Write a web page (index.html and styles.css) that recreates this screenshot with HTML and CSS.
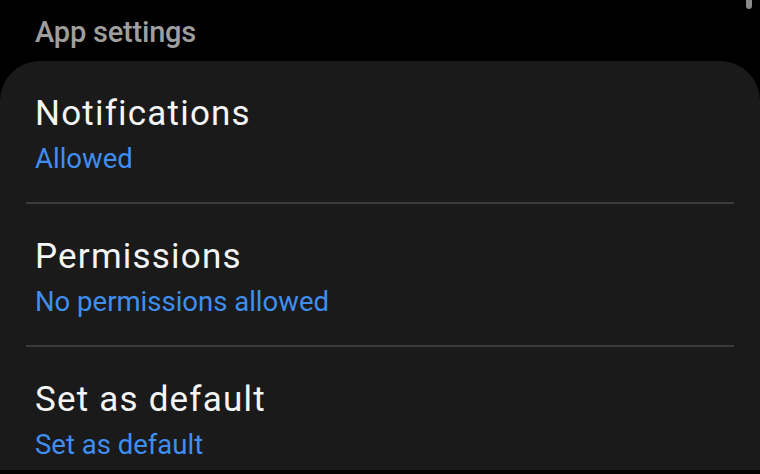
FILE: index.html
```html
<!DOCTYPE html>
<html>
<head>
<meta charset="utf-8">
<link rel="stylesheet" href="styles.css">
</head>
<body>
<div class="screen">
  <div class="scrollbar"></div>
  <div class="header">App settings</div>
  <div class="card">
    <div class="row">
      <div class="title">Notifications</div>
      <div class="sub">Allowed</div>
    </div>
    <div class="divider"></div>
    <div class="row">
      <div class="title">Permissions</div>
      <div class="sub">No permissions allowed</div>
    </div>
    <div class="divider"></div>
    <div class="row">
      <div class="title">Set as default</div>
      <div class="sub">Set as default</div>
    </div>
  </div>
</div>
</body>
</html>
```

FILE: styles.css
```css
html, body {
  margin: 0;
  padding: 0;
  background: #000;
}
.screen {
  position: relative;
  width: 760px;
  height: 474px;
  overflow: hidden;
  background: #000;
  font-family: Roboto, "Noto Sans", sans-serif;
}
.scrollbar {
  position: absolute;
  top: -4px;
  left: 746px;
  width: 6px;
  height: 13px;
  border-radius: 3px;
  background: #8a8a8a;
}
.header {
  height: 61px;
  box-sizing: border-box;
  padding: 15px 0 0 35px;
  font-size: 29px;
  font-weight: 500;
  line-height: 34px;
  letter-spacing: -0.2px;
  color: #9e9e9e;
}
.card {
  background: #1a1a1a;
  border-radius: 40px 40px 0 0;
  height: 409px;
  overflow: hidden;
  display: flex;
  flex-direction: column;
}
.row {
  flex-shrink: 0;
  padding: 33px 35px 27px;
  display: flex;
  flex-direction: column;
  gap: 9px;
}
.title {
  font-size: 35px;
  line-height: 40px;
  letter-spacing: 1.2px;
  color: #f5f5f5;
}
.sub {
  font-size: 27.5px;
  line-height: 32px;
  color: #3f8ef0;
}
.divider {
  flex-shrink: 0;
  height: 2px;
  margin: 0 26px;
  background: #3b3b3b;
}
```
